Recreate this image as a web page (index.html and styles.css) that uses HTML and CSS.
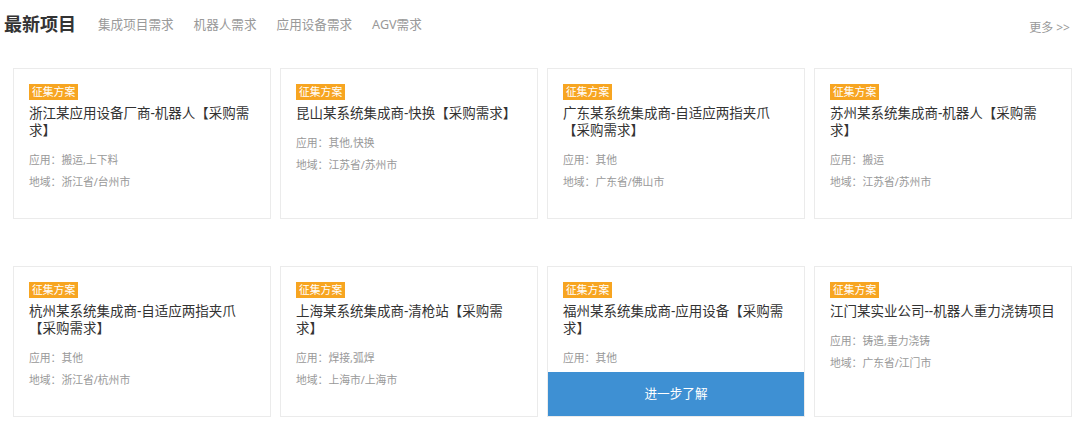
FILE: index.html
```html
<!DOCTYPE html>
<html lang="zh-CN">
<head>
<meta charset="utf-8">
<title>最新项目</title>
<link rel="stylesheet" href="styles.css">
</head>
<body>
<div class="section">
  <div class="head">
    <h2 class="head-title">最新项目</h2>
    <a class="tab">集成项目需求</a>
    <a class="tab">机器人需求</a>
    <a class="tab">应用设备需求</a>
    <a class="tab">AGV需求</a>
    <a class="more">更多 &gt;&gt;</a>
  </div>
  <div class="grid">
    <div class="card">
      <span class="badge">征集方案</span>
      <div class="title">浙江某应用设备厂商-机器人【采购需求】</div>
      <div class="meta">应用：搬运,上下料</div>
      <div class="meta">地域：浙江省/台州市</div>
    </div>
    <div class="card">
      <span class="badge">征集方案</span>
      <div class="title">昆山某系统集成商-快换【采购需求】</div>
      <div class="meta">应用：其他,快换</div>
      <div class="meta">地域：江苏省/苏州市</div>
    </div>
    <div class="card">
      <span class="badge">征集方案</span>
      <div class="title">广东某系统集成商-自适应两指夹爪【采购需求】</div>
      <div class="meta">应用：其他</div>
      <div class="meta">地域：广东省/佛山市</div>
    </div>
    <div class="card">
      <span class="badge">征集方案</span>
      <div class="title">苏州某系统集成商-机器人【采购需求】</div>
      <div class="meta">应用：搬运</div>
      <div class="meta">地域：江苏省/苏州市</div>
    </div>
    <div class="card">
      <span class="badge">征集方案</span>
      <div class="title">杭州某系统集成商-自适应两指夹爪【采购需求】</div>
      <div class="meta">应用：其他</div>
      <div class="meta">地域：浙江省/杭州市</div>
    </div>
    <div class="card">
      <span class="badge">征集方案</span>
      <div class="title">上海某系统集成商-清枪站【采购需求】</div>
      <div class="meta">应用：焊接,弧焊</div>
      <div class="meta">地域：上海市/上海市</div>
    </div>
    <div class="card">
      <span class="badge">征集方案</span>
      <div class="title">福州某系统集成商-应用设备【采购需求】</div>
      <div class="meta">应用：其他</div>
      <a class="more-btn">进一步了解</a>
    </div>
    <div class="card">
      <span class="badge">征集方案</span>
      <div class="title">江门某实业公司--机器人重力浇铸项目</div>
      <div class="meta">应用：铸造,重力浇铸</div>
      <div class="meta">地域：广东省/江门市</div>
    </div>
  </div>
</div>
</body>
</html>
```
FILE: styles.css
```css
* { box-sizing: border-box; }
body {
  margin: 0;
  background: #fff;
  font-family: "Noto Sans", "Noto Sans CJK SC", sans-serif;
  color: #333;
}
.head {
  display: flex;
  align-items: center;
  height: 48px;
  padding: 0 10px 0 4px;
}
.head-title {
  margin: 0 2px 0 0;
  font-size: 18px;
  font-weight: bold;
  color: #333;
  line-height: 24px;
}
.tab {
  margin-left: 20px;
  font-size: 12.6px;
  color: #999;
  line-height: 20px;
  padding-top: 2px;
}
.more {
  margin-left: auto;
  font-size: 12px;
  color: #999;
  padding-top: 6px;
}
.grid {
  display: grid;
  grid-template-columns: repeat(4, 258px);
  column-gap: 9px;
  row-gap: 47px;
  margin-top: 20px;
  padding-left: 13px;
}
.card {
  position: relative;
  height: 151px;
  border: 1px solid #ebebeb;
  padding: 15px 15px 0 15px;
  background: #fff;
  text-spacing-trim: space-all;
}
.badge {
  display: block;
  width: fit-content;
  height: 16px;
  line-height: 16px;
  padding: 0 3px;
  background: #f7a521;
  color: #fff;
  font-size: 10.8px;
}
.title {
  margin: 5px 0 10px;
  font-size: 13.5px;
  line-height: 17px;
  color: #333;
}
.meta {
  font-size: 10.8px;
  line-height: 22px;
  color: #999;
}
.more-btn {
  position: absolute;
  left: 0;
  right: 0;
  bottom: 0;
  height: 44px;
  line-height: 44px;
  background: #3e90d3;
  color: #fff;
  text-align: center;
  font-size: 12.6px;
}
```
